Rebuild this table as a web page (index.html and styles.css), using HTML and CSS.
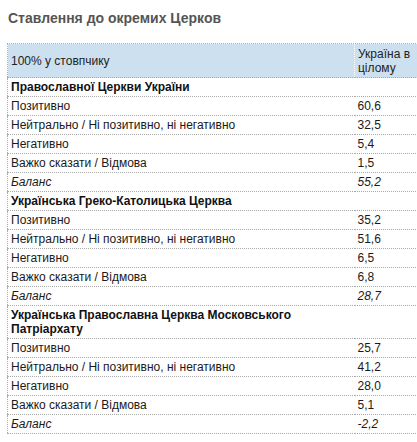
FILE: index.html
```html
<!DOCTYPE html>
<html>
<head>
<meta charset="utf-8">
<link rel="stylesheet" href="styles.css">
</head>
<body>
<h2 class="title">Ставлення до окремих Церков</h2>
<table class="data">
  <colgroup><col class="c-lbl"><col class="c-val"></colgroup>
  <thead>
    <tr><th class="lbl">100% у стовпчику</th><th class="val">Україна в цілому</th></tr>
  </thead>
  <tbody>
    <tr class="group"><td colspan="2">Православної Церкви України</td></tr>
    <tr><td>Позитивно</td><td class="val">60,6</td></tr>
    <tr><td>Нейтрально / Ні позитивно, ні негативно</td><td class="val">32,5</td></tr>
    <tr><td>Негативно</td><td class="val">5,4</td></tr>
    <tr><td>Важко сказати / Відмова</td><td class="val">1,5</td></tr>
    <tr class="bal"><td>Баланс</td><td class="val">55,2</td></tr>
    <tr class="group"><td colspan="2">Українська Греко-Католицька Церква</td></tr>
    <tr><td>Позитивно</td><td class="val">35,2</td></tr>
    <tr><td>Нейтрально / Ні позитивно, ні негативно</td><td class="val">51,6</td></tr>
    <tr><td>Негативно</td><td class="val">6,5</td></tr>
    <tr><td>Важко сказати / Відмова</td><td class="val">6,8</td></tr>
    <tr class="bal"><td>Баланс</td><td class="val">28,7</td></tr>
    <tr class="group"><td colspan="2">Українська Православна Церква Московського<br>Патріархату</td></tr>
    <tr><td>Позитивно</td><td class="val">25,7</td></tr>
    <tr><td>Нейтрально / Ні позитивно, ні негативно</td><td class="val">41,2</td></tr>
    <tr><td>Негативно</td><td class="val">28,0</td></tr>
    <tr><td>Важко сказати / Відмова</td><td class="val">5,1</td></tr>
    <tr class="bal"><td>Баланс</td><td class="val">-2,2</td></tr>
  </tbody>
</table>
</body>
</html>
```
FILE: styles.css
```css
html, body {
  margin: 0;
  padding: 0;
  background: #fff;
}
body {
  padding: 10px 0 0 7px;
  font-family: "Liberation Sans", Arial, sans-serif;
  font-size: 12px;
  color: #1a1a1a;
  overflow: hidden;
}
.title {
  margin: 0 0 16px 1px;
  font-size: 14px;
  font-weight: bold;
  color: #555;
  line-height: 17px;
}
.data {
  border-collapse: collapse;
  table-layout: fixed;
  width: 410px;
  border-left: 1px dotted #aaa;
  border-top: 1px dotted #aaa;
}
.c-lbl { width: 347px; }
.c-val { width: 63px; }
.data th, .data td {
  padding: 2px 3px;
  line-height: 14px;
  text-align: left;
  vertical-align: middle;
  border-bottom: 1px dotted #aaa;
}
.data th {
  background: #cde0ef;
  font-weight: normal;
  color: #222;
  height: 29px;
}
.data th.val { border-left: 1px dotted #fff; }
.data td.val { border-left: none; }
.group td {
  font-weight: bold;
  color: #111;
}
.bal td {
  font-style: italic;
}
```
